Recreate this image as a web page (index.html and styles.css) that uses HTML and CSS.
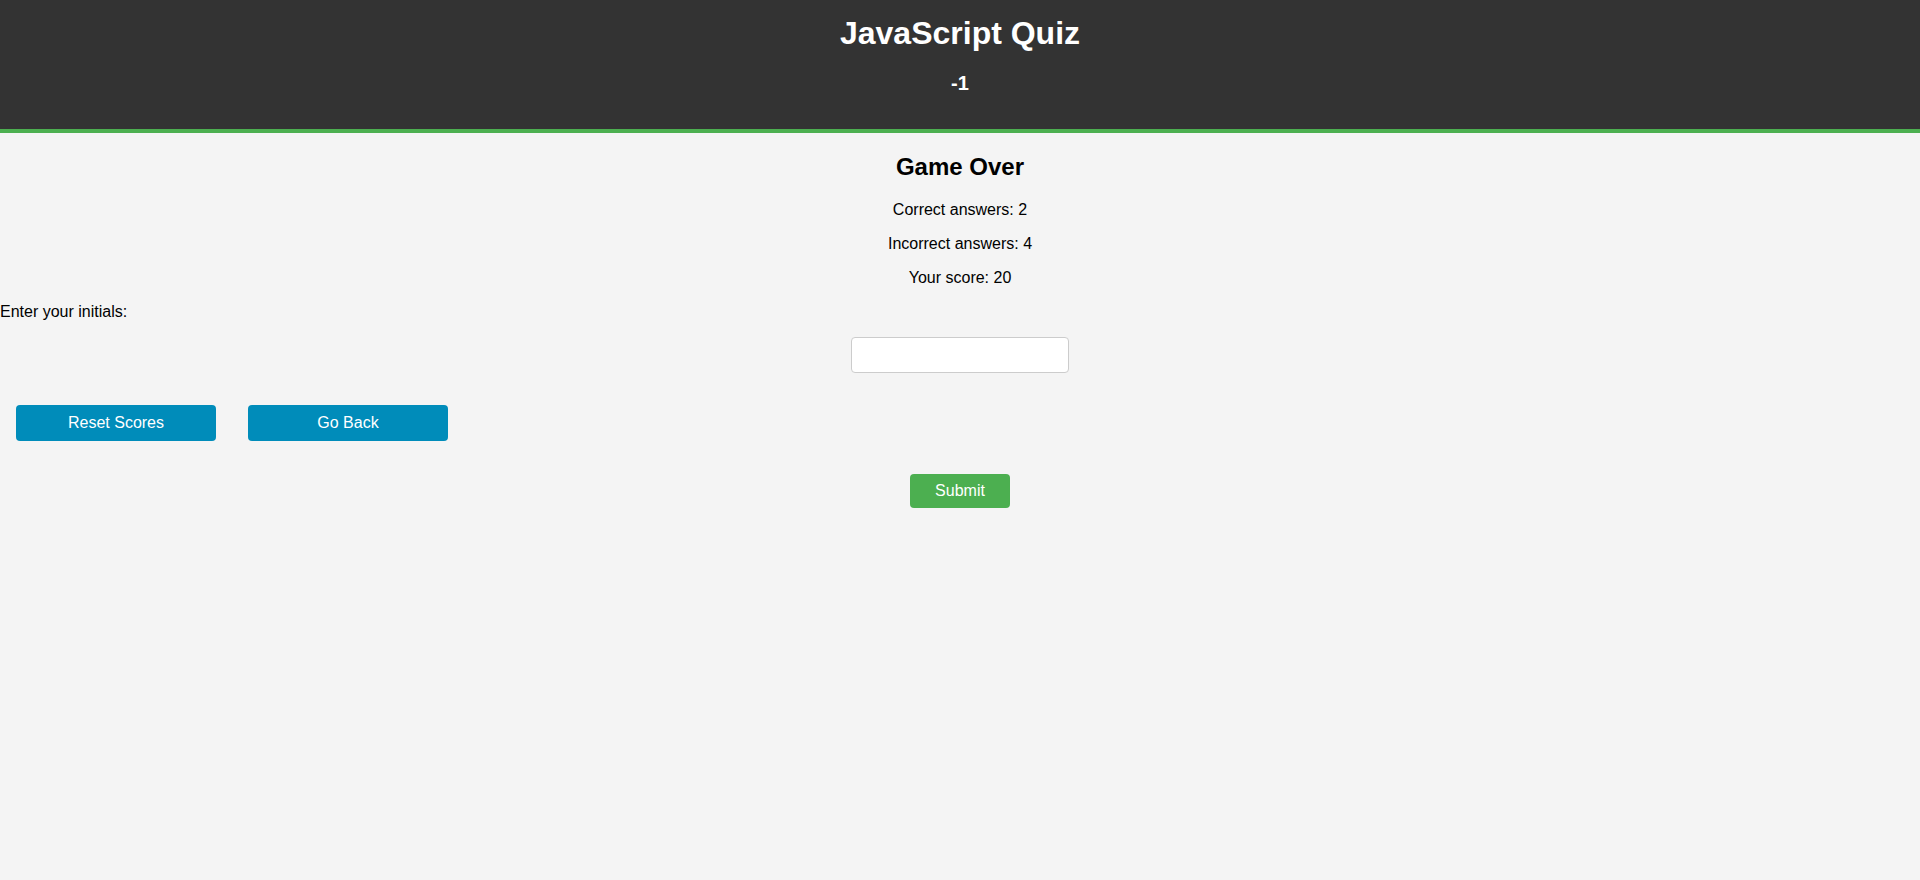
FILE: index.html
```html
<!DOCTYPE html>
<html lang="en">
<head>
<meta charset="utf-8">
<title>JavaScript Quiz</title>
<link rel="stylesheet" href="styles.css">
</head>
<body>
<header class="site-header">
  <h1 class="title">JavaScript Quiz</h1>
  <div class="timer">-1</div>
</header>
<main class="results">
  <h2 class="results-heading">Game Over</h2>
  <p class="stat">Correct answers: 2</p>
  <p class="stat">Incorrect answers: 4</p>
  <p class="stat">Your score: 20</p>
  <label class="initials-label" for="initials">Enter your initials:</label>
  <input class="initials-input" id="initials" type="text">
  <div class="actions">
    <button class="btn btn-blue" type="button">Reset Scores</button>
    <button class="btn btn-blue" type="button">Go Back</button>
  </div>
  <button class="btn-submit" type="button">Submit</button>
</main>
</body>
</html>
```

FILE: styles.css
```css
html, body {
  margin: 0;
  padding: 0;
}

body {
  background: #f4f4f4;
  color: #000;
  font-family: "Liberation Sans", Arial, sans-serif;
  font-size: 16px;
}

.site-header {
  background: #333;
  color: #fff;
  text-align: center;
  padding: 15px 0 34px;
  border-bottom: 4px solid #4caf50;
}

.title {
  margin: 0;
  font-size: 32px;
  font-weight: bold;
}

.timer {
  margin-top: 20px;
  font-size: 20px;
  font-weight: bold;
}

.results-heading {
  text-align: center;
  font-size: 24px;
  margin: 20px 0;
}

.stat {
  text-align: center;
  margin: 16px 0;
}

.initials-label {
  display: block;
}

.initials-input {
  display: block;
  margin: 16px auto;
  width: 200px;
  padding: 8px;
  font-size: 16px;
  font-family: inherit;
  line-height: 18px;
  border: 1px solid #ccc;
  border-radius: 4px;
  background: #fff;
}

.actions {
  display: flex;
  padding: 16px;
  gap: 32px;
}

.btn {
  width: 200px;
  height: 36px;
  border: none;
  border-radius: 4px;
  color: #fff;
  font-family: inherit;
  font-size: 16px;
  cursor: pointer;
}

.btn-blue {
  background: #008cba;
}

.btn-submit {
  display: block;
  margin: 17px auto 0;
  width: 100px;
  height: 34px;
  border: none;
  border-radius: 4px;
  background: #4caf50;
  color: #fff;
  font-family: inherit;
  font-size: 16px;
  cursor: pointer;
}
```
